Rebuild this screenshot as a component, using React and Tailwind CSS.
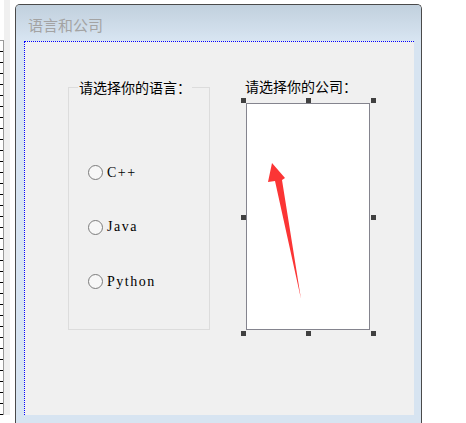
import React from "react";

const cjk = { fontFamily: '"Noto Sans CJK SC", "Noto Sans", sans-serif' };
const serif = { fontFamily: '"Liberation Serif", "Noto Sans CJK SC", serif' };

const languages = ["C++", "Java", "Python"];

function Radio({ label }) {
  return (
    <div className="flex h-[15px] items-center">
      <span className="h-[15px] w-[15px] rounded-full border-[1.5px] border-[#7c7c7c] bg-[#f7f7f7]" />
      <span className="ml-[4px] text-[14px] leading-[16px] tracking-[1.5px] text-black" style={serif}>
        {label}
      </span>
    </div>
  );
}

function Handle({ className }) {
  return <span className={"absolute h-[5px] w-[5px] bg-[#404040] " + className} />;
}

export default function App() {
  const ticks = Array.from({ length: 34 });

  return (
    <div className="flex h-[423px] w-[466px] overflow-hidden bg-white">
      {/* left ruler strip */}
      <div className="flex h-full w-[15px] shrink-0">
        <div className="w-[4px] pt-[40px]">
          <div className="h-[375px] border-t border-r border-[#9a9a9a] bg-white">
            {ticks.map((_, i) => (
              <div key={i} className="h-[11px] w-[3px] border-b border-black" />
            ))}
          </div>
        </div>
        <div className="h-[415px] w-[6px] bg-[#f0f0f0]" />
        <div className="w-[5px]" />
      </div>

      {/* window */}
      <div className="mt-[4px] flex w-[407px] shrink-0 flex-col rounded-t-[5px] border-x border-t border-[#4a4a4a] bg-[#d7e4f1]">
        <div className="flex h-[36px] shrink-0 items-center rounded-t-[4px] bg-gradient-to-b from-[#c1d0dd] to-[#d8e5f2] pl-[12px]">
          <span className="pt-[4px] text-[15px] leading-[18px] text-[#a3a3a3]" style={cjk}>
            语言和公司
          </span>
        </div>

        <div className="flex h-[374px] shrink-0">
          <div className="w-[8px]" />
          <div className="flex w-[390px] items-start border-l border-t border-dotted border-[#0000ff] bg-[#f0f0f0] pl-[43px] pt-[36px]">
            {/* language group box */}
            <div className="relative mt-[9px] h-[243px] w-[142px] border border-[#dcdcdc]">
              <span
                className="absolute left-[9px] top-[-9px] bg-[#f0f0f0] px-[1px] text-[14px] leading-[16px] text-black"
                style={cjk}
              >
                请选择你的语言：
              </span>
              <div className="flex flex-col gap-[39.5px] pl-[19px] pt-[77px]">
                {languages.map((l) => (
                  <Radio key={l} label={l} />
                ))}
              </div>
            </div>

            {/* company list */}
            <div className="ml-[35px] flex flex-col">
              <span className="h-[16px] text-[14px] leading-[16px] text-black" style={cjk}>
                请选择你的公司：
              </span>
              <div className="relative ml-[1px] mt-[9px] h-[227px] w-[124px]">
                <div className="relative h-full w-full border border-[#84848e] bg-white">
                  <svg className="absolute left-0 top-0" width="122" height="225" viewBox="0 0 122 225">
                    <polygon
                      points="25,59 38,74 35,76 54,195 28,77 21,78"
                      fill="#fb3535"
                    />
                  </svg>
                </div>
                <Handle className="left-[-5px] top-[-5px]" />
                <Handle className="left-[60px] top-[-5px]" />
                <Handle className="left-[125px] top-[-5px]" />
                <Handle className="left-[-5px] top-[112px]" />
                <Handle className="left-[125px] top-[112px]" />
                <Handle className="left-[-5px] top-[228px]" />
                <Handle className="left-[60px] top-[228px]" />
                <Handle className="left-[125px] top-[228px]" />
              </div>
            </div>
          </div>
          <div className="w-[7px]" />
        </div>

        {/* bottom frame */}
        <div className="h-[12px] shrink-0" />
      </div>
    </div>
  );
}
